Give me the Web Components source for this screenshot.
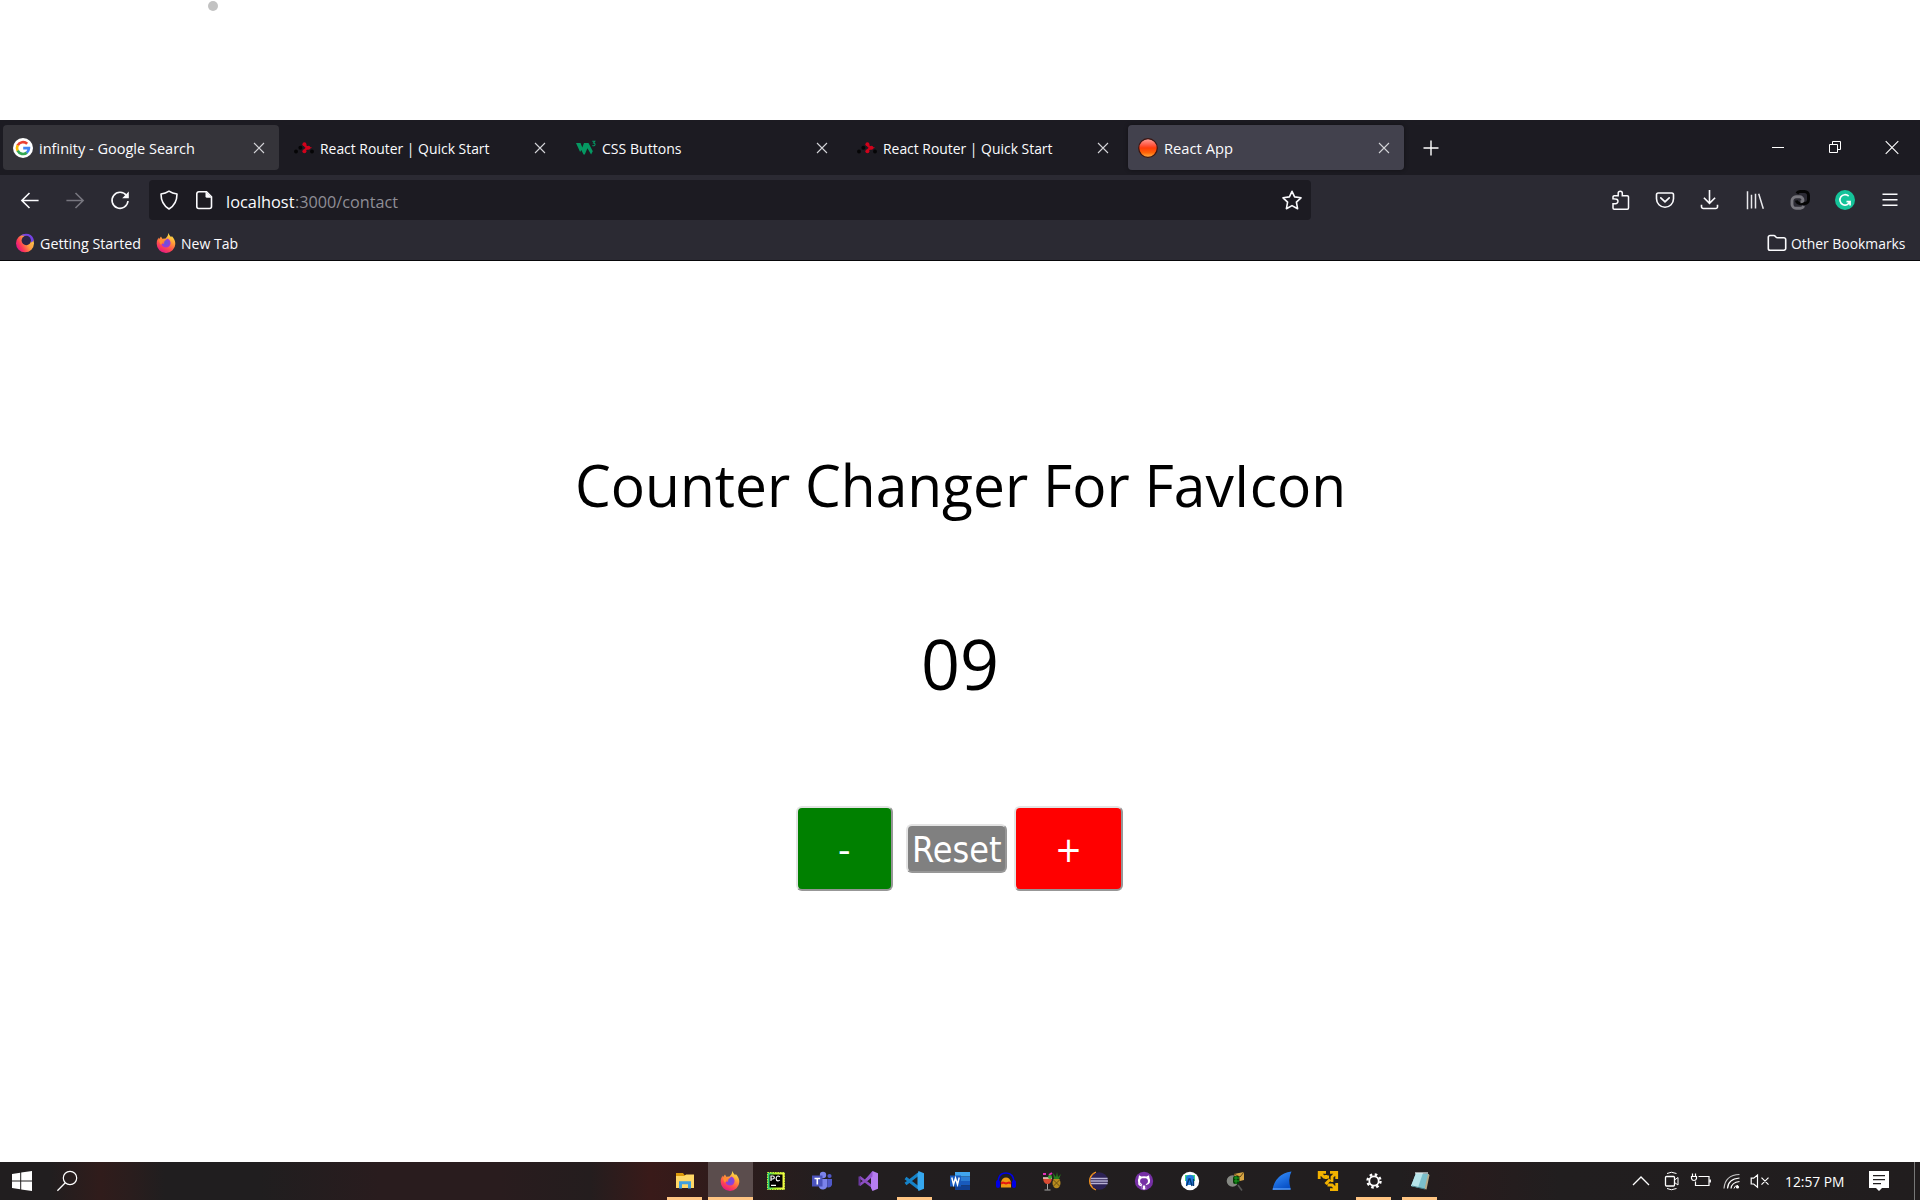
<!DOCTYPE html>
<html lang="en">
<head>
<meta charset="utf-8">
<title>React App</title>
<style>
html,body{margin:0;padding:0;background:#fff;overflow:hidden}
body{width:1920px;height:1200px;font-family:"Open Sans","Noto Sans",sans-serif}
</style>
</head>
<body>
<desktop-screen></desktop-screen>
<script>
const define = (name, css, html, setup) => customElements.define(name, class extends HTMLElement {
  constructor() { super(); this.attachShadow({mode: "open"}); }
  connectedCallback() {
    this.shadowRoot.innerHTML = `<style>*{box-sizing:border-box}${css}</style>${typeof html === "function" ? html(this) : html}`;
    if (setup) setup(this);
  }
});

const ICONS = {
close:`<path d="M5 5l10 10M15 5L5 15" stroke="#d4d4d8" stroke-width="1.1"/>`,
plus:`<path d="M10 2.5v15M2.5 10h15" stroke="#fff" stroke-width="1.4"/>`,
min:`<path d="M4 10.5h12" stroke="#fff" stroke-width="1"/>`,
restore:`<path d="M4.5 7.5h8v8h-8zM7.500 7.500v-3h8v8h-3" fill="none" stroke="#fff"/>`,
wclose:`<path d="M3.700 4.200l12.600 12.600M16.300 4.200L3.700 16.800" stroke="#fff" stroke-width="1.1"/>`,
google:`<circle cx="10" cy="10" r="10" fill="#fff"/><g fill="none" stroke-width="2.700"><path d="M4.700 7.400A6 6 0 0 1 14.200 5.800" stroke="#ea4335"/><path d="M4.700 7.200a6 6 0 0 0 0 5.600" stroke="#fbbc05"/><path d="M4.700 12.600A6 6 0 0 0 13.900 14.600" stroke="#34a853"/><path d="M13.700 14.700A6 6 0 0 0 15.900 10.200H10.200" stroke="#4285f4"/></g>`,
router:`<g fill="#050506"><circle cx="2" cy="13.500" r="1.900"/><circle cx="6.400" cy="9.800" r="2"/><circle cx="18" cy="13.500" r="1.900"/></g><path d="M10.500 6.300q.5 2.500 3.700 3.500q-3.200.9-3.700 3.500" fill="none" stroke="#d0021b" stroke-width="2.300"/><g fill="#d0021b"><circle cx="10.400" cy="6.300" r="2"/><circle cx="14.400" cy="9.700" r="2"/><circle cx="10.400" cy="13.300" r="2"/></g>`,
w3:`<path d="M0 5h4.500l1.800 4.500L8 5h4.500l4.300 8.300-1.700 3.200-3.700-6.300-2.600 6.300H7.500L5.300 12l-1.200 2z" fill="#059862"/><path d="M16.300 3.200h2.500l-1.300 1.800q1.800.2 1.500 1.700-.6 1.600-2.600.7" fill="none" stroke="#059862" stroke-width="1.100"/>`,
red:`<defs><linearGradient id="r" x2="0" y2="1"><stop offset="0" stop-color="#ffa39b"/><stop offset=".35" stop-color="#ff5640"/><stop offset=".5" stop-color="#ff3c0a"/><stop offset=".75" stop-color="#ff6408"/><stop offset="1" stop-color="#ffb347"/></linearGradient></defs><circle cx="10" cy="10" r="9.300" fill="url(#r)" stroke="#3a1512" stroke-width="1.200"/>`,
back:`<path d="M18.600 10.500H1.800M9.500 3L1.900 10.500l7.600 7.500" fill="none" stroke="#fbfbfe" stroke-width="1.600"/>`,
fwd:`<path d="M1.400 10.500h16.800M10.500 3l7.600 7.500-7.600 7.500" fill="none" stroke="#77767f" stroke-width="1.600"/>`,
reload:`<path d="M16.500 5.600A8 8 0 1 0 18 11" fill="none" stroke="#fbfbfe" stroke-width="1.600"/><path d="M18.800 1.600v6.600h-6.600z" fill="#fbfbfe"/>`,
shield:`<path d="M10 1.200c2.500 1.700 5.200 2.500 8 2.800 0 7-3 12-8 15-5-3-8-8-8-15 2.800-.3 5.500-1.100 8-2.800z" fill="none" stroke="#fbfbfe" stroke-width="1.600" stroke-linejoin="round"/>`,
page:`<path d="M4.800 1.800h7.700l5 5v9.700a2 2 0 0 1-2 2H4.800a2 2 0 0 1-2-2V3.800a2 2 0 0 1 2-2z" fill="none" stroke="#fbfbfe" stroke-width="1.600"/><path d="M11.500 1.500l6.200 6.300h-4.700a1.500 1.500 0 0 1-1.500-1.500z" fill="#fbfbfe"/>`,
star:`<path d="M10 1.300l2.600 5.600 6.400.9-4.600 4.400 1.200 6.500-5.600-3.100-5.600 3.100 1.200-6.500L1 7.800l6.400-.9z" fill="none" stroke="#fbfbfe" stroke-width="1.600" stroke-linejoin="round"/>`,
ext:`<path d="M3 8.800V7a1.200 1.200 0 0 1 1.200-1.200h4V3.300a2 2 0 0 1 4.100 0v2.500h5A1.200 1.200 0 0 1 18.500 7v11a1.200 1.200 0 0 1-1.200 1.200H4.200A1.200 1.200 0 0 1 3 18v-4.200h2.500a2.400 2.400 0 0 0 0-4.900z" fill="none" stroke="#fbfbfe" stroke-width="1.500"/>`,
pocket:`<path d="M3.200 3h13.600a1.700 1.700 0 0 1 1.700 1.700v4a8.500 8.500 0 0 1-17 0v-4A1.700 1.700 0 0 1 3.200 3z" fill="none" stroke="#fbfbfe" stroke-width="1.600"/><path d="M5.800 7.800l4.200 4 4.200-4" fill="none" stroke="#fbfbfe" stroke-width="1.700" stroke-linecap="round"/>`,
down:`<path d="M9.500 0v13.200M3.900 7.800L9.500 13.400l5.600-5.600M1.500 14.800v1.900a1.800 1.800 0 0 0 1.800 1.800h12.400a1.800 1.800 0 0 0 1.800-1.800v-1.900" fill="none" stroke="#fbfbfe" stroke-width="1.600"/>`,
lib:`<path d="M2.500 1.200v18M6.500 4.800v13.700M10.500 3.800v14.700M13.700 3.700l4.600 15.100" fill="none" stroke="#e8e8ec" stroke-width="1.500"/>`,
link:`<path d="M7 3.500q1-2 3.500-2h4a4 4 0 0 1 4 4v4a4 4 0 0 1-4 4H10a4 4 0 0 1-3.600-3" fill="none" stroke="#050505" stroke-width="3"/><path d="M13.700 16q-1 2.200-3.200 2.200H6a4 4 0 0 1-4-4v-3.400a4 4 0 0 1 4-4h3.500a3.500 3.500 0 0 1 3.500 3.500q0 1.500-2.500 1.500" fill="none" stroke="#77767d" stroke-width="2.900"/>`,
gram:`<circle cx="10" cy="10" r="10" fill="#15c39a"/><path d="M13.700 6.100A5.200 5.200 0 1 0 15 11.600h-3.500M15.100 11v4.600" fill="none" stroke="#fff" stroke-width="1.600"/>`,
menu:`<path d="M2.500 4.200h15M2.500 9.700h15M2.500 15.200h15" stroke="#fbfbfe" stroke-width="1.500"/>`,
folder:`<path d="M1.300 4.300a1.800 1.800 0 0 1 1.800-1.800h3.600c2 0 1.900 2.300 3.900 2.300h6.300a1.800 1.800 0 0 1 1.800 1.800v8.800a1.800 1.800 0 0 1-1.800 1.800H3.100a1.800 1.800 0 0 1-1.800-1.800z" fill="none" stroke="#fbfbfe" stroke-width="1.600"/>`,
ffold:`<defs><linearGradient id="a" x1=".95" y1=".3" x2=".1" y2=".8"><stop offset="0" stop-color="#ffc84f"/><stop offset=".4" stop-color="#ff9a40"/><stop offset=".75" stop-color="#ff3b55"/><stop offset="1" stop-color="#e31587"/></linearGradient></defs><circle cx="10" cy="10.300" r="9" fill="url(#a)"/><path d="M5.500 2.600Q9-.2 13.500 1q4.800 1.800 5.300 6.500l-2.300 2L13 3z" fill="#7542e5"/><circle cx="11.300" cy="7.500" r="4.700" fill="#2b2546"/>`,
ff:`<defs><linearGradient id="f" x1=".8" y1="0" x2=".3" y2="1"><stop offset="0" stop-color="#fff44f"/><stop offset=".35" stop-color="#ffa436"/><stop offset=".7" stop-color="#ff4a4f"/><stop offset="1" stop-color="#e31587"/></linearGradient><radialGradient id="g"><stop offset="0" stop-color="#5b5bd8"/><stop offset="1" stop-color="#a136d8"/></radialGradient></defs><path d="M12.600 0q.2 2.400 2.600 4.200l.6-1.200Q19.500 7 19.300 11a9.300 9 0 0 1-18.600-.2Q.6 7.500 2.500 4.500l.4 1.800L5 3.500l1.300 2.200 3.300-.2Q11.800 4 12.600 0z" fill="url(#f)"/><path d="M7 8q3-1 4.500-2.600 3.500 1.700 3 5.400-.8 3.800-4.500 3.700-3.900-.2-4.700-3.700 2.200.3 3.200-.9z" fill="url(#g)"/><path d="M3 6.500Q7 6.500 9.700 7.600 8.500 9 6.500 9.200L5 12Q3 9.500 3 6.500z" fill="#ff8e2e"/>`,
win:`<path d="M0 2.900l8.200-1.200v7.700H0zM9.200 1.500L20 0v9.400H9.200zM0 10.400h8.200v7.800L0 17.100zM9.200 10.400H20V20L9.200 18.400z" fill="#fff"/>`,
search:`<circle cx="13" cy="7" r="6.700" fill="none" stroke="#fff" stroke-width="1.200"/><path d="M8.300 11.800L.4 19.700" stroke="#fff" stroke-width="1.300"/>`,
explorer:`<path d="M1 2h7l1.500 2H19v3H1z" fill="#dc9a0b"/><path d="M1 5h8.500L11 3.500h8V17H1z" fill="#ffd867"/><path d="M4 17.500v-7.200h12v7.200h-3v-4.200H7v4.200z" fill="#3f9fe0"/>`,
pc:`<defs><linearGradient id="p"><stop stop-color="#21d789"/><stop offset=".4" stop-color="#a5ee28"/><stop offset="1" stop-color="#fcf84a"/></linearGradient></defs><rect x="1.500" y="1.500" width="17" height="17" fill="url(#p)"/><rect x="1.500" y="1.500" width="17" height="17" fill="none" stroke="#c6f233" stroke-dasharray="1.500 1"/><rect x="3.500" y="3.500" width="13" height="13" fill="#000"/><path d="M5 10V5h1.800a1.500 1.500 0 0 1 0 3H5M13.800 6Q13 4.900 11.900 5q-1.700.2-1.800 2.500.1 2.200 1.800 2.400 1.100.1 1.900-.9M5 14.300h5" fill="none" stroke="#fff" stroke-width="1.200"/>`,
teams:`<circle cx="11" cy="4" r="3.200" fill="#7b83eb"/><circle cx="17.500" cy="5" r="2.100" fill="#5059c9"/><path d="M7 8h8.200v6.500a4.300 4.300 0 0 1-8.400 1z" fill="#7b83eb"/><path d="M15.200 8H20v5.500q-1 3.500-4.800 2.800z" fill="#5059c9"/><rect y="4.500" width="10.500" height="11" fill="#4b53bc"/><path d="M2.500 7.500h5.700M5.300 7.500v6" stroke="#fff" stroke-width="1.600"/>`,
vs:`<path d="M1.500 6L14 15.500M1.500 14L14 4.500" stroke="#8c4ec2" stroke-width="2.600"/><path d="M1.500 5.500v9" stroke="#69389d" stroke-width="2"/><path d="M14.500 0L20 2.300v15.400L14.500 20 13 17V3z" fill="#b57df0"/><path d="M14.500 0v5.500L9.500 10l-2-2z" fill="#9556d0"/>`,
code:`<path d="M1.500 7L14.500 17M1.500 13L14.500 3" stroke="#1683c8" stroke-width="3"/><path d="M14.500 0L20 2.300v15.400L14.500 20 13.500 17V3z" fill="#36a8ef"/>`,
word:`<path d="M5 1h15v4.500H5z" fill="#41a5ee"/><path d="M5 5.500h15V10H5z" fill="#2b7cd3"/><path d="M5 10h15v4.500H5z" fill="#185abd"/><path d="M5 14.500h15V19H5z" fill="#103f91"/><rect y="4.500" width="11" height="11" fill="#185abd"/><path d="M1.800 6.500l1.700 7 2-6.500 2 6.500 1.700-7" fill="none" stroke="#fff" stroke-width="1.500"/>`,
aud:`<path d="M2 12Q2 2 10 2t8 10" fill="none" stroke="#0000e6" stroke-width="1.600"/><rect y="9" width="4" height="8" rx="2" fill="#0000e6"/><rect x="16" y="9" width="4" height="8" rx="2" fill="#0000e6"/><path d="M5 16.500v-5q1-5 5-5t5 5v5z" fill="#ef9b13"/><path d="M5 12.500l2-1 3 1 3-1 2 1" fill="none" stroke="#e31812" stroke-width="2"/>`,
fruit:`<path d="M1 7h9q-.5 6-4.500 6T1 7z" fill="#d94b32"/><path d="M1 7h9" stroke="#e8d6ca" stroke-width="1.500"/><path d="M5.500 13v5.500M2.500 19h6" stroke="#a8a8a8"/><path d="M1 3h3M7 4l3-2" stroke="#e32db8" stroke-width="2"/><ellipse cx="14.500" cy="12" rx="4" ry="5.300" fill="#b78b1e"/><path d="M11 2l3 4 1-5 1 5 3-3-2 5h-5z" fill="#267b1c"/><path d="M11.500 9l6 6M17.500 9l-6 6" stroke="#6d5012"/><circle cx="8" cy="6" r="2" fill="#38a534"/>`,
eclipse:`<path d="M8 1A9.500 9.500 0 0 0 8 19 12 12 0 0 1 8 1z" fill="#f7941e" stroke="#f7941e"/><circle cx="11.200" cy="10" r="8.800" fill="#2c2255"/><path d="M2.800 7.500h16.800M2.500 10h17.400M2.800 12.500h16.800" stroke="#b7b1d4" stroke-width="1.400"/>`,
github:`<circle cx="10" cy="10" r="9.200" fill="#7630a5"/><path d="M8.200 17.300v-2.800q-2 .5-2.700-.8l-1.200-1.300" fill="none" stroke="#fff" stroke-width="1.300"/><path d="M5 4.200l2.500 1.300q2.500-.6 5 0L15 4.200l.5 3q1.300 2 .3 4.500-1 2-3.800 2.300l.3 3.500H7.700L8 14q-2.800-.3-3.800-2.300-1-2.500.3-4.500z" fill="#fff"/><path d="M7.500 17.500q-.3-3 .8-4.200-2.500-.7-2.300-3.200.1-2.300 2-2.800h4q1.900.5 2 2.800.2 2.500-2.300 3.200 1.100 1.200.8 4.200z" fill="#7630a5"/><path d="M8.800 18.500v-4h2.400v4z" fill="#fff"/>`,
studio:`<circle cx="10" cy="10" r="9.200" fill="#fff"/><path d="M5 4h10v6H5z" fill="#3ddc84"/><path d="M6 5.500q4-3.500 8 0v8.500H6z" fill="#247cdb"/><path d="M6.500 15L9 8h1l2 7M13.500 8v7" fill="none" stroke="#073a75" stroke-width="1.400"/>`,
net:`<path d="M8 3l10-2v8l-8 2z" fill="#d6a544"/><path d="M8 3l6 3 4-5" fill="none" stroke="#604514"/><circle cx="6.500" cy="10" r="5.800" fill="#858882"/><rect x="7" y="5" width="6.500" height="8" rx="2" fill="#083b08"/><path d="M8 7h5M8 10h5M10 5v8" stroke="#18a51d"/><path d="M12 14l4 5.500" stroke="#555" stroke-width="1.600"/>`,
shark:`<defs><linearGradient id="s" x2=".5" y2="1"><stop stop-color="#3c96ff"/><stop offset="1" stop-color="#0750c7"/></linearGradient></defs><path d="M.5 19Q3 3 19.500.5 15.500 8 18.800 18.500z" fill="url(#s)"/><path d="M.8 18h17.800" stroke="#65a9ff" stroke-width="1.200"/>`,
vmware:`<path d="M1.200 8V1.300H8M1.500 1.500l4.500 4.500h5M12 1.300h6.700V8M18.500 1.500L14 6v5M18.700 12v6.700H12M18.500 18.500L14 14H9.500M8 4v4M12 8.500L7.500 13" fill="none" stroke="#f2b200" stroke-width="2.800"/>`,
gear:`<circle cx="10" cy="10" r="4.700" fill="none" stroke="#fff" stroke-width="1.800"/><circle cx="10" cy="10" r="6.500" fill="none" stroke="#fff" stroke-width="2.400" stroke-dasharray="2.550 2.550"/>`,
notes:`<path d="M6 2l13 1-4 15L1 15z" fill="#7bbfca"/><path d="M6 2h7L8 16.500 1 15z" fill="#b6e4e9"/><path d="M18 3l1.500 1-3 14.500-2-.5z" fill="#b8ab88"/><path d="M5 2h13" stroke="#dce6e8" stroke-width="1.300"/><path d="M2 15l13 3" stroke="#46818b"/>`,
chev:`<path d="M2 14l8-8 8 8" fill="none" stroke="#fff" stroke-width="1.300"/>`,
meet:`<rect x="3.500" y="5.500" width="9" height="9.500" rx="1" fill="none" stroke="#fff" stroke-width="1.300"/><path d="M12.500 9l3.500-2.500v7.500l-3.500-2.500M5 2.500q4-2.500 9.500 0M5 17.500q4 2.500 9.500 0" fill="none" stroke="#fff"/>`,
batt:`<path d="M7.500 5.500H18v9H4.500v-4M19.300 8.500v3M1.500 2.500v3M4.500 2.500v3M.5 5.500h5v2q-.5 2-2.500 2t-2.500-2z" fill="none" stroke="#fff" stroke-width="1.200"/>`,
wifi:`<g fill="none" stroke="#fff" stroke-width="1.200"><path d="M2 17.500Q3 4 17.500 3.500" opacity=".75"/><path d="M5.500 17.500Q6 8 17.500 7"/><path d="M9 17.500Q9.500 11.500 17.500 10.500"/></g><path d="M12 17.500q.5-3 4-3" stroke="#fff" fill="none"/><circle cx="15.500" cy="16" r="1.600" fill="#fff"/>`,
mute:`<path d="M1.200 7.200h2.500L7.500 4v12.200L3.700 13H1.200zM11.500 6.700l7 7M18.500 6.700l-7 7" fill="none" stroke="#fff" stroke-width="1.200"/>`,
notif:`<path d="M0 0h20v17h-7l-3 3-3-3H0z" fill="#fff"/><path d="M4 4.700h12M4 8.700h12M4 12.700h8" stroke="#211e1f" stroke-width="1.200"/>`
};

define("ui-icon", `:host{display:block;flex:none}svg{display:block;overflow:visible}`,
  h => `<svg width="${h.getAttribute("size") || 20}" height="${h.getAttribute("size") || 20}" viewBox="0 0 20 20">${ICONS[h.getAttribute("name")]}</svg>`);

// A single line of text, condensed or widened to the requested advance width.
define("fit-text", `:host{display:block;flex:none;white-space:pre}span{display:inline-block;transform-origin:0 50%;white-space:pre}`,
  `<span><slot></slot></span>`, h => {
    const s = h.shadowRoot.querySelector("span"), w = +h.getAttribute("w");
    h.style.width = w + "px";
    s.style.transform = `scaleX(${w / s.getBoundingClientRect().width})`;
  });

define("browser-tab", `:host{display:flex;align-items:center;width:276px;height:45px;border-radius:4px;padding:0 10px;color:#fbfbfe;font-size:14.600px;line-height:20px;flex:none}
  :host([hover]){background:#35343a}:host([active]){background:#42414d;box-shadow:0 0 4px #0006}
  fit-text{margin-left:6.200px}.x{margin-left:auto}ui-icon{margin-top:1px}.x{margin-top:0}`,
  h => `<ui-icon name="${h.getAttribute("icon")}"></ui-icon><fit-text w="${h.getAttribute("w")}">${h.getAttribute("label")}</fit-text><ui-icon class="x" name="close"></ui-icon>`);

define("tab-strip", `:host{display:flex;height:55px;background:#1c1b22;padding:5px 0 5px 3px;align-items:center}
  .tabs{display:flex;gap:5.250px}.new{margin-left:16.500px}.win{margin-left:auto;display:flex;padding-bottom:2px}.win span{width:56.700px;display:flex;justify-content:center}`,
  `<div class="tabs"><browser-tab hover icon="google" label="infinity - Google Search" w="156"></browser-tab><browser-tab icon="router" label="React Router | Quick Start" w="169.500"></browser-tab><browser-tab icon="w3" label="CSS Buttons" w="79.500"></browser-tab><browser-tab icon="router" label="React Router | Quick Start" w="169.500"></browser-tab><browser-tab active icon="red" label="React App" w="69"></browser-tab></div>
  <ui-icon class="new" name="plus"></ui-icon><div class="win"><span><ui-icon name="min"></ui-icon></span><span><ui-icon name="restore"></ui-icon></span><span><ui-icon name="wclose"></ui-icon></span></div>`);

define("nav-bar", `:host{display:flex;height:50px;background:#2b2a33;align-items:center;padding:0 7.500px}
  span{width:45px;display:flex;justify-content:center;flex:none}.url{display:flex;align-items:center;width:1162px;height:40px;margin-left:6.500px;padding:0 9px 0 10px;border-radius:4px;background:#1c1b22;font-size:16.400px;line-height:22px;color:#fbfbfe}
  .url .page{margin-left:15px}.url fit-text{margin:3px 0 0 12px}.url .rest{color:#8f8e96;margin-left:0}.star{margin-left:auto}.tools{display:flex;margin-left:auto}`,
  `<span><ui-icon name="back"></ui-icon></span><span><ui-icon name="fwd"></ui-icon></span><span><ui-icon name="reload"></ui-icon></span>
  <div class="url"><ui-icon name="shield"></ui-icon><ui-icon class="page" name="page"></ui-icon><fit-text w="68.500">localhost</fit-text><fit-text class="rest" w="103">:3000/contact</fit-text><ui-icon class="star" name="star"></ui-icon></div>
  <div class="tools">${["ext","pocket","down","lib","link","gram","menu"].map(n => `<span><ui-icon name="${n}"></ui-icon></span>`).join("")}</div>`);

define("bookmarks-bar", `:host{display:flex;height:36px;background:#2b2a33;border-bottom:1px solid #08080a;align-items:center;padding:0 14.500px 0 15px;color:#fbfbfe;font-size:14.600px;line-height:20px}
  fit-text{margin-left:5px}.b{margin-left:15px}.f{margin-left:auto}.o{margin-left:4.500px}`,
  `<ui-icon name="ffold"></ui-icon><fit-text w="101">Getting Started</fit-text><ui-icon class="b" name="ff"></ui-icon><fit-text w="57">New Tab</fit-text><ui-icon class="f" name="folder"></ui-icon><fit-text class="o" w="114.500">Other Bookmarks</fit-text>`);

define("counter-button", `:host{display:block;flex:none}button{display:flex;align-items:center;justify-content:center;width:100%;height:100%;padding:3px 0 0;border:2px solid;border-color:#e3e3e3 #979797 #979797 #e3e3e3;border-radius:6px;background:var(--fill);color:#fff;font:35px "DejaVu Sans Condensed","DejaVu Sans",sans-serif;line-height:40px}`,
  h => `<button><fit-text w="${h.getAttribute("w")}">${h.getAttribute("label")}</fit-text></button>`);

define("counter-page", `:host{display:flex;flex-direction:column;align-items:center;height:901px;background:#fff;color:#000;padding-top:183px}
  .title{font-size:59px;line-height:80px}.value{font-size:70px;line-height:96px;margin-top:91px}
  .row{display:flex;align-items:center;margin-top:95px;height:85px;padding-right:1.500px}.m{width:97px;height:85px;--fill:#008000}.r{width:101px;height:49px;margin:0 7.500px 0 13px;--fill:#808080}.p{width:109px;height:85px;--fill:#f00}`,
  `<fit-text class="title" w="771">Counter Changer For FavIcon</fit-text><fit-text class="value" w="78">09</fit-text>
  <div class="row"><counter-button class="m" label="-" w="12.600"></counter-button><counter-button class="r" label="Reset" w="89.500"></counter-button><counter-button class="p" label="+" w="27"></counter-button></div>`);

define("task-bar", `:host{display:flex;align-items:center;height:38px;color:#fff;font-size:14.600px;line-height:20px;background:linear-gradient(90deg,#211e1f 0,#211e1f 50px,#301c1b 100px,#2a1d1d 130px,#201e1f 165px,#201e1f 260px,#291c1e 380px,#291c1e 500px,#241d1e 590px,#391a19 650px,#2c1c1c 740px,#221e1f 830px,#211e1f 1400px,#271c1d 1470px,#211e1f 1560px,#211d1e 100%)}
  .apps{display:flex;gap:.950px;margin-left:585px;height:38px}.app{width:45px;display:flex;flex-direction:column;align-items:center;padding-top:9px}.app i{width:35px;height:3px;background:#ffc583;margin-top:6px}.cur{background:#5b4d4d}.cur i{width:45px}
  .start{margin-left:12px}.search{margin-left:25px}.tray{display:flex;align-items:center;margin-left:auto;height:38px}.end{width:6px;height:38px;border-left:1px solid #777;margin-left:25px}`,
  () => {
    const run = ["explorer","ff","code","gear","notes"];
    return `<ui-icon class="start" name="win"></ui-icon><ui-icon class="search" name="search"></ui-icon><div class="apps">${["explorer","ff","pc","teams","vs","code","word","aud","fruit","eclipse","github","studio","net","shark","vmware","gear","notes"].map(n => `<div class="app ${n === "ff" ? "cur" : ""}"><ui-icon name="${n}"></ui-icon>${run.includes(n) ? "<i></i>" : ""}</div>`).join("")}</div>
    <div class="tray"><ui-icon name="chev"></ui-icon><ui-icon name="meet" style="margin-left:11px"></ui-icon><ui-icon name="batt" style="margin-left:9px"></ui-icon><ui-icon name="wifi" style="margin-left:11px"></ui-icon><ui-icon name="mute" style="margin-left:8px"></ui-icon><fit-text w="59.500" style="margin-left:15px">12:57 PM</fit-text><ui-icon name="notif" style="margin-left:24.500px"></ui-icon><div class="end"></div></div>`;
  });

define("desktop-screen", `:host{display:flex;flex-direction:column;width:1920px;height:1200px}.blank{height:120px;padding:1px 0 0 208px}.dot{width:10px;height:10px;border-radius:50%;background:#c2c2c2}`,
  `<div class="blank"><div class="dot"></div></div><tab-strip></tab-strip><nav-bar></nav-bar><bookmarks-bar></bookmarks-bar><counter-page></counter-page><task-bar></task-bar>`);
</script>
</body>
</html>
